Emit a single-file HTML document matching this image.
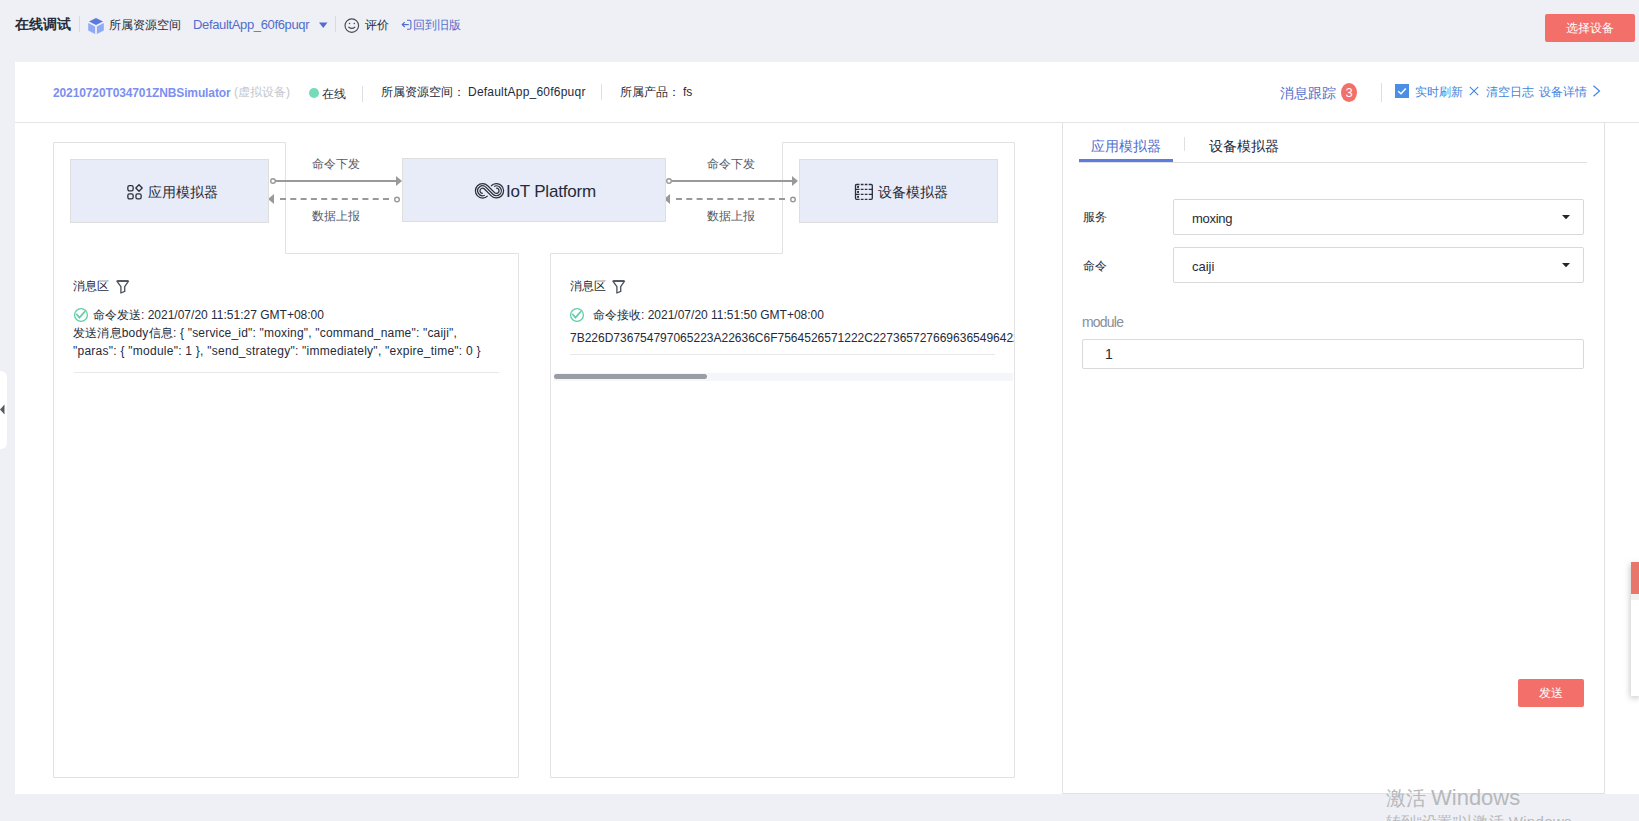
<!DOCTYPE html>
<html><head><meta charset="utf-8">
<style>
html,body{margin:0;padding:0;}
body{width:1639px;height:821px;overflow:hidden;position:relative;background:#eef0f5;font-family:"Liberation Sans",sans-serif;color:#252b3a;}
.a{position:absolute;white-space:nowrap;line-height:1;}
.card{position:absolute;left:15px;top:62px;width:1624px;height:732px;background:#fff;}
svg{position:absolute;left:0;top:0;}
.t12{font-size:12px;}
.blue{color:#526ecc;}
.box{position:absolute;background:#e8ecf8;box-sizing:border-box;border:1px solid #dedede;}
.btn{position:absolute;background:#f36f6a;border-radius:2px;color:#fff;font-size:12px;text-align:center;}
</style></head><body>

<!-- top bar -->
<div class="a" id="title" style="left:15px;top:17px;font-size:14px;font-weight:bold;">在线调试</div>
<div class="a" style="left:79px;top:16px;width:1px;height:16px;background:#d8dbe2"></div>
<svg style="left:88px;top:17px" width="17" height="17" viewBox="0 0 17 17">
 <path d="M8 1 L15 4.5 L8 8 L1 4.5 Z" fill="#5b7ae0"/>
 <path d="M0.2 6 L7.1 9.5 L7.1 17 L0.2 13.5 Z" fill="#92aaf5"/>
 <path d="M15.8 6 L8.9 9.5 L8.9 17 L15.8 13.5 Z" fill="#92aaf5"/>
</svg>
<div class="a t12" style="left:109px;top:19px;">所属资源空间</div>
<div class="a blue" id="dapp" style="left:193px;top:18px;font-size:13px;letter-spacing:-0.35px;">DefaultApp_60f6puqr</div>
<svg style="left:319px;top:22px" width="9" height="7" viewBox="0 0 9 7"><path d="M0 0.5 L8.5 0.5 L4.25 6 Z" fill="#526ecc"/></svg>
<div class="a" style="left:335px;top:16px;width:1px;height:16px;background:#d8dbe2"></div>
<svg style="left:344px;top:18px" width="16" height="16" viewBox="0 0 16 16">
 <circle cx="7.8" cy="7.6" r="6.8" fill="none" stroke="#454a55" stroke-width="1.15"/>
 <circle cx="5.5" cy="5.6" r="0.75" fill="#454a55"/><circle cx="10.3" cy="5.6" r="0.75" fill="#454a55"/>
 <path d="M4.8 9.2 Q7.8 11.4 10.8 9.2" fill="none" stroke="#454a55" stroke-width="1.15" stroke-linecap="round"/>
</svg>
<div class="a t12" style="left:365px;top:19px;">评价</div>
<svg style="left:401px;top:19px" width="12" height="13" viewBox="0 0 12 13">
 <path d="M1.3 5.6 H7.8" stroke="#526ecc" stroke-width="1.2" fill="none"/>
 <path d="M3.7 3.2 L1.3 5.6 L3.7 8" stroke="#526ecc" stroke-width="1.2" fill="none"/>
 <path d="M6 1.3 H8.4 Q9.9 1.3 9.9 2.8 V8.8 Q9.9 10.3 8.4 10.3 H6" stroke="#526ecc" stroke-width="1.1" fill="none"/>
</svg>
<div class="a t12 blue" style="left:413px;top:19px;">回到旧版</div>

<div class="btn" style="left:1545px;top:14px;width:90px;height:28px;line-height:28px;">选择设备</div>

<!-- card -->
<div class="card"></div>
<div class="a" style="left:15px;top:122px;width:1624px;height:1px;background:#e4e4e4"></div>

<div class="a" id="devname" style="left:53px;top:87px;font-size:12px;font-weight:bold;color:#7b8ff0;letter-spacing:-0.12px;">20210720T034701ZNBSimulator</div>
<div class="a" style="left:234px;top:86px;font-size:12px;color:#c3c6cd;">(虚拟设备)</div>
<div class="a" style="left:309px;top:88px;width:10px;height:10px;border-radius:50%;background:#76dbb9"></div>
<div class="a t12" style="left:322px;top:88px;">在线</div>
<div class="a" style="left:362px;top:86px;width:1px;height:16px;background:#dcdfe6"></div>
<div class="a t12" style="left:381px;top:86px;">所属资源空间：</div>
<div class="a" id="dapp2" style="left:468px;top:86px;font-size:12px;letter-spacing:0.22px;">DefaultApp_60f6puqr</div>
<div class="a" style="left:601px;top:84px;width:1px;height:16px;background:#dcdfe6"></div>
<div class="a t12" style="left:620px;top:86px;">所属产品：</div>
<div class="a" style="left:683px;top:86px;font-size:12px;">fs</div>

<div class="a blue" style="left:1280px;top:86px;font-size:14px;">消息跟踪</div>
<div class="a" style="left:1341px;top:83px;width:16px;height:19px;border-radius:50%;background:#f36f6a;color:#fff;font-size:13px;line-height:19px;text-align:center;">3</div>
<div class="a" style="left:1381px;top:83px;width:1px;height:19px;background:#dcdfe6"></div>
<div class="a" style="left:1395px;top:84px;width:14px;height:14px;background:#4a8ee6"></div>
<svg style="left:1395px;top:84px" width="14" height="14" viewBox="0 0 14 14"><path d="M3.2 7.2 L6 9.8 L10.8 4.4" fill="none" stroke="#fff" stroke-width="1.5"/></svg>
<div class="a t12" style="left:1415px;top:86px;color:#4186e0;">实时刷新</div>
<svg style="left:1469px;top:86px" width="10" height="10" viewBox="0 0 10 10"><path d="M0.8 0.8 L9.2 9.2 M9.2 0.8 L0.8 9.2" stroke="#4186e0" stroke-width="1.1"/></svg>
<div class="a t12" style="left:1486px;top:86px;color:#4186e0;">清空日志</div>
<div class="a t12" style="left:1539px;top:86px;color:#4186e0;">设备详情</div>
<svg style="left:1592px;top:85px" width="10" height="12" viewBox="0 0 10 12"><path d="M1.5 0.8 L7.5 6 L1.5 11.2" fill="none" stroke="#4186e0" stroke-width="1.2"/></svg>

<!-- panel borders -->
<svg width="1639" height="821" viewBox="0 0 1639 821" style="pointer-events:none">
 <path d="M53.5 777.5 V142.5 H285.5 V253.5 H518.5 V777.5 Z" fill="none" stroke="#e2e2e2" stroke-width="1"/>
 <path d="M550.5 777.5 V253.5 H782.5 V142.5 H1014.5 V777.5 Z" fill="none" stroke="#e2e2e2" stroke-width="1"/>
 <path d="M1062.5 122 V793.5 H1604.5 V122" fill="none" stroke="#e2e2e2" stroke-width="1"/>
 <!-- arrows left -->
 <line x1="275" y1="181" x2="396" y2="181" stroke="#999" stroke-width="2"/>
 <circle cx="273" cy="181" r="2.3" fill="#fff" stroke="#999" stroke-width="1.4"/>
 <path d="M396 176 L402 181 L396 186 Z" fill="#999"/>
 <line x1="280" y1="199" x2="390" y2="199" stroke="#999" stroke-width="2" stroke-dasharray="6 4.3"/>
 <path d="M274 194 L268 199 L274 204 Z" fill="#999"/>
 <circle cx="397" cy="199.5" r="2.3" fill="#fff" stroke="#999" stroke-width="1.4"/>
 <!-- arrows right -->
 <line x1="671" y1="181" x2="792" y2="181" stroke="#999" stroke-width="2"/>
 <circle cx="669" cy="181" r="2.3" fill="#fff" stroke="#999" stroke-width="1.4"/>
 <path d="M792 176 L798 181 L792 186 Z" fill="#999"/>
 <line x1="676" y1="199" x2="786" y2="199" stroke="#999" stroke-width="2" stroke-dasharray="6 4.3"/>
 <path d="M670 194 L664 199 L670 204 Z" fill="#999"/>
 <circle cx="793" cy="199.5" r="2.3" fill="#fff" stroke="#999" stroke-width="1.4"/>
</svg>

<div class="box" style="left:70px;top:159px;width:199px;height:64px;"></div>
<div class="box" style="left:402px;top:158px;width:264px;height:64px;"></div>
<div class="box" style="left:799px;top:159px;width:199px;height:64px;"></div>

<svg style="left:126px;top:183px" width="18" height="18" viewBox="0 0 18 18">
 <rect x="1.85" y="2.65" width="5.3" height="5.3" rx="1.6" fill="none" stroke="#2b2f3a" stroke-width="1.3"/>
 <rect x="1.85" y="10.85" width="5.3" height="5.1" rx="1.6" fill="none" stroke="#2b2f3a" stroke-width="1.3"/>
 <rect x="9.95" y="10.85" width="5.2" height="5.1" rx="1.6" fill="none" stroke="#2b2f3a" stroke-width="1.3"/>
 <path d="M13 1.8 L16.2 5 L13 8.2 L9.8 5 Z" fill="none" stroke="#2b2f3a" stroke-width="1.3" stroke-linejoin="round"/>
</svg>
<div class="a" style="left:148px;top:185px;font-size:14px;">应用模拟器</div>

<svg style="left:474px;top:182px" width="31" height="18" viewBox="0 0 31 18">
 <g fill="none" stroke="#2b2f3a" stroke-width="1.25">
  <path d="M13.69 13.89 A7.2 7.2 0 1 1 13.69 3.71 L20.58 10.62 A2.6 2.6 0 1 0 22.17 6.21"/>
  <path d="M10.75 13.2 A4.9 4.9 0 1 1 12.05 5.35 L18.95 12.25 A4.9 4.9 0 1 0 20.1 4.47"/>
  <path d="M8.78 11.39 A2.6 2.6 0 1 1 10.42 6.98 L17.32 13.88 A7.2 7.2 0 1 0 17.05 3.98"/>
 </g>
</svg>
<div class="a" id="iot" style="left:506px;top:182.5px;font-size:17px;letter-spacing:-0.2px;">IoT Platform</div>

<svg style="left:854px;top:183px" width="20" height="18" viewBox="0 0 20 18">
 <g stroke="#2b2f3a" stroke-width="1.3" fill="none">
  <path d="M5.5 1.5 H2.6 Q1.5 1.5 1.5 2.6 V15.2 Q1.5 16.3 2.6 16.3 H5.5"/>
  <path d="M14.7 1.5 H17.2 Q18.3 1.5 18.3 2.6 V15.2 Q18.3 16.3 17.2 16.3 H14.7"/>
  <path d="M6.8 1.5 H9.5 M10.8 1.5 H13.4 M6.8 16.3 H9.5 M10.8 16.3 H13.4"/>
  <path d="M1.5 6.4 H5.5 M6.8 6.4 H9.5 M10.8 6.4 H13.4 M14.7 6.4 H18.3 M1.5 11.4 H5.5 M6.8 11.4 H9.5 M10.8 11.4 H13.4 M14.7 11.4 H18.3"/>
 </g>
 <rect x="3.1" y="3" width="1.9" height="1.9" fill="#2b2f3a"/>
 <rect x="3.1" y="8" width="1.9" height="1.9" fill="#2b2f3a"/>
 <rect x="3.1" y="12.9" width="1.9" height="1.9" fill="#2b2f3a"/>
</svg>
<div class="a" style="left:878px;top:185px;font-size:14px;">设备模拟器</div>

<div class="a t12" style="left:312px;top:158px;color:#555a66;">命令下发</div>
<div class="a t12" style="left:312px;top:210px;color:#555a66;">数据上报</div>
<div class="a t12" style="left:707px;top:158px;color:#555a66;">命令下发</div>
<div class="a t12" style="left:707px;top:210px;color:#555a66;">数据上报</div>

<!-- left message area -->
<div class="a t12" style="left:73px;top:280px;">消息区</div>
<svg style="left:115px;top:279px" width="16" height="16" viewBox="0 0 16 16"><path d="M1.9 2.1 H13.5 L9.7 7.6 V12.4 L5.9 14 V7.6 Z" fill="none" stroke="#4d5360" stroke-width="1.35" stroke-linejoin="round"/><path d="M2.2 2 H13.2" stroke="#4d5360" stroke-width="1.8"/></svg>
<svg style="left:73px;top:307px" width="16" height="16" viewBox="0 0 16 16"><circle cx="8" cy="8" r="6.4" fill="none" stroke="#5fcfa7" stroke-width="1.3"/><path d="M3.2 6.8 L6.5 10.6 L12 4.2" fill="none" stroke="#5fcfa7" stroke-width="1.7"/></svg>
<div class="a t12" id="m1" style="left:93px;top:309px;">命令发送: 2021/07/20 11:51:27 GMT+08:00</div>
<div class="a t12" id="m2" style="left:73px;top:327px;letter-spacing:0.19px;">发送消息body信息: { "service_id": "moxing", "command_name": "caiji",</div>
<div class="a t12" id="m3" style="left:73px;top:345px;letter-spacing:0.25px;">"paras": { "module": 1 }, "send_strategy": "immediately", "expire_time": 0 }</div>
<div class="a" style="left:74px;top:372px;width:425px;height:1px;background:#e8e8e8"></div>

<!-- right message area -->
<div class="a t12" style="left:570px;top:280px;">消息区</div>
<svg style="left:611px;top:279px" width="16" height="16" viewBox="0 0 16 16"><path d="M1.9 2.1 H13.5 L9.7 7.6 V12.4 L5.9 14 V7.6 Z" fill="none" stroke="#4d5360" stroke-width="1.35" stroke-linejoin="round"/><path d="M2.2 2 H13.2" stroke="#4d5360" stroke-width="1.8"/></svg>
<svg style="left:569px;top:307px" width="16" height="16" viewBox="0 0 16 16"><circle cx="8" cy="8" r="6.4" fill="none" stroke="#5fcfa7" stroke-width="1.3"/><path d="M3.2 6.8 L6.5 10.6 L12 4.2" fill="none" stroke="#5fcfa7" stroke-width="1.7"/></svg>
<div class="a t12" id="m4" style="left:593px;top:309px;">命令接收: 2021/07/20 11:51:50 GMT+08:00</div>
<div class="a" style="left:551px;top:320px;width:463px;height:40px;overflow:hidden;">
 <div class="a t12" id="m5" style="left:19px;top:12px;">7B226D736754797065223A22636C6F7564526571222C2273657276696365496422</div>
</div>
<div class="a" style="left:570px;top:354px;width:425px;height:1px;background:#e8e8e8"></div>
<div class="a" style="left:554px;top:373px;width:459px;height:8px;background:#f5f6f9"></div>
<div class="a" style="left:554px;top:374px;width:153px;height:5px;border-radius:3px;background:#9a9da4"></div>

<!-- right simulator panel -->
<div class="a blue" style="left:1091px;top:139px;font-size:14px;">应用模拟器</div>
<div class="a" style="left:1184px;top:137px;width:1px;height:14px;background:#e0e0e0"></div>
<div class="a" style="left:1209px;top:139px;font-size:14px;">设备模拟器</div>
<div class="a" style="left:1079px;top:162px;width:508px;height:1px;background:#e0e0e0"></div>
<div class="a" style="left:1079px;top:159px;width:94px;height:3px;background:#5e7ce0"></div>

<div class="a t12" style="left:1083px;top:211px;">服务</div>
<div class="a" style="left:1173px;top:199px;width:411px;height:36px;box-sizing:border-box;border:1px solid #d9d9d9;border-radius:2px;"></div>
<div class="a" style="left:1192px;top:212px;font-size:13px;letter-spacing:-0.3px;">moxing</div>
<svg style="left:1561px;top:214px" width="10" height="6" viewBox="0 0 10 6"><path d="M1 1 H9 L5 5.3 Z" fill="#262626"/></svg>

<div class="a t12" style="left:1083px;top:260px;">命令</div>
<div class="a" style="left:1173px;top:247px;width:411px;height:36px;box-sizing:border-box;border:1px solid #d9d9d9;border-radius:2px;"></div>
<div class="a" style="left:1192px;top:260px;font-size:13px;">caiji</div>
<svg style="left:1561px;top:262px" width="10" height="6" viewBox="0 0 10 6"><path d="M1 1 H9 L5 5.3 Z" fill="#262626"/></svg>

<div class="a" style="left:1082px;top:315px;font-size:14px;letter-spacing:-0.8px;color:#8a8e99;">module</div>
<div class="a" style="left:1082px;top:339px;width:502px;height:30px;box-sizing:border-box;border:1px solid #d9d9d9;border-radius:2px;"></div>
<div class="a" style="left:1105px;top:347px;font-size:14px;">1</div>

<div class="btn" style="left:1518px;top:679px;width:66px;height:28px;line-height:28px;">发送</div>

<!-- left collapse tab -->
<div class="a" style="left:-8px;top:371px;width:15px;height:78px;border-radius:6px;background:#fff;"></div>
<svg style="left:0px;top:404px" width="5" height="11" viewBox="0 0 5 11"><path d="M4.5 0.5 V10.5 L0 5.5 Z" fill="#555a66"/></svg>

<!-- right floating -->
<div class="a" style="left:1631px;top:562px;width:10px;height:134px;background:#fff;box-shadow:-1px 2px 6px rgba(0,0,0,0.22);"></div>
<div class="a" style="left:1631px;top:562px;width:10px;height:32px;background:#e8766b;"></div>
<div class="a" style="left:1631px;top:594px;width:10px;height:6px;background:#f0f0f0;"></div>

<!-- watermark -->
<div class="a" style="left:1386px;top:788px;font-size:20px;color:#b7b8bb;">激活</div>
<div class="a" id="win" style="left:1431px;top:787px;font-size:22px;color:#b7b8bb;">Windows</div>
<div class="a" id="win2" style="left:1386px;top:814px;font-size:15px;letter-spacing:0.35px;color:#b7b8bb;">转到“设置”以激活 Windows。</div>

</body></html>
